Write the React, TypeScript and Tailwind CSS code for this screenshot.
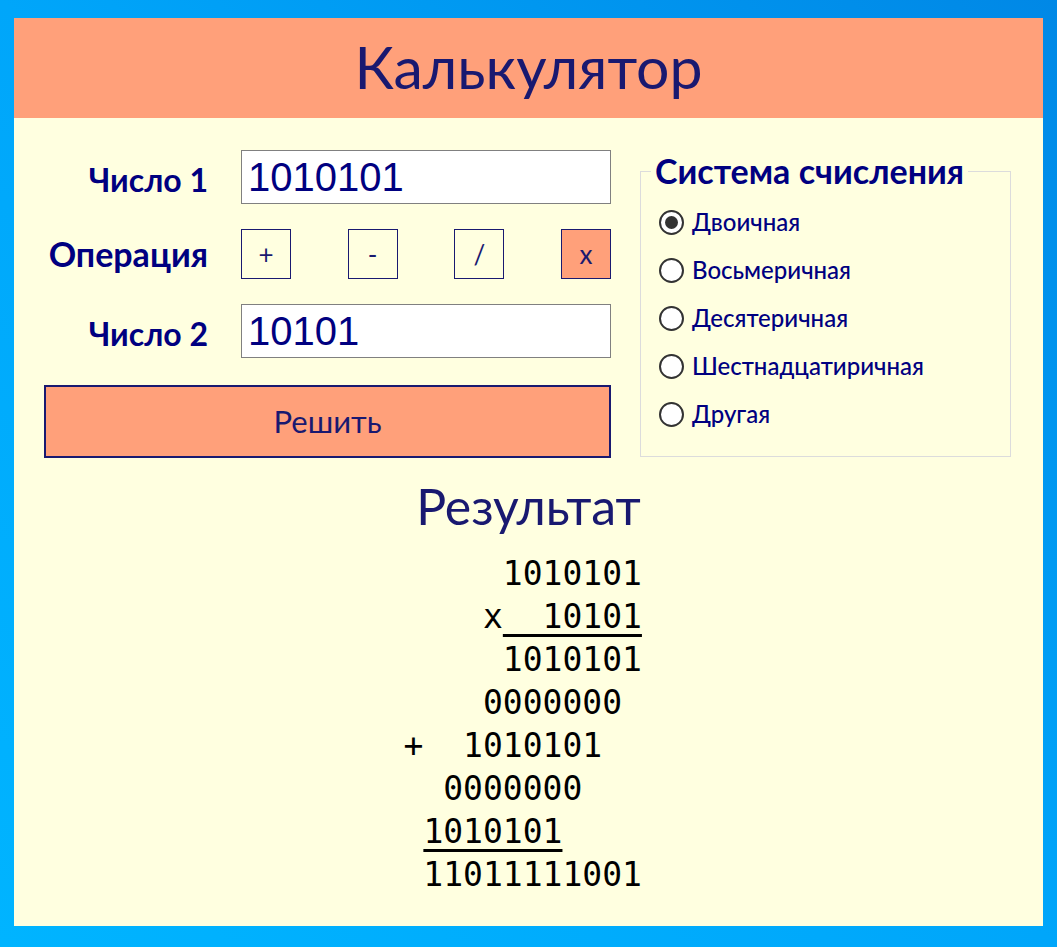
import { useState } from 'react';

const ops = ['+', '-', '/', 'x'];
const bases = ['Двоичная', 'Восьмеричная', 'Десятеричная', 'Шестнадцатиричная', 'Другая'];

// one line of the column multiplication: plain prefix, optional underlined part
const lines: [string, string?][] = [
  ['     1010101'],
  ['    x', '  10101'],
  ['     1010101'],
  ['    0000000'],
  ['+  1010101'],
  ['  0000000'],
  [' ', '1010101'],
  [' 11011111001'],
];

export default function App() {
  const [op, setOp] = useState('x');
  const [base, setBase] = useState('Двоичная');

  return (
    <div className="min-h-screen w-full bg-gradient-to-tr from-[#00b4ff] via-[#00a6fa] to-[#0088e6] pt-[18px] pb-[21px] px-[14px] font-['Lato',sans-serif]">
      <div className="h-[908px] bg-[#ffffe0] flex flex-col">
        <div className="h-[100px] bg-[#ffa07a] flex items-center justify-center">
          <h1 className="text-[59px] leading-none text-[#191970] font-normal pb-1">Калькулятор</h1>
        </div>

        <div className="flex pt-8 pl-[30px] pr-[32px] gap-[29px]">
          <div className="w-[567px] flex flex-col">
            <div className="flex items-center gap-[33px]">
              <span className="w-[164px] text-right text-[32px] leading-none pt-[6px] font-bold text-[#000080]">Число 1</span>
              <input
                defaultValue="1010101"
                className="w-[370px] h-[54px] bg-white border border-[#808080] px-[6px] text-[40px] text-[#000080] font-['Liberation_Sans',sans-serif] outline-none"
              />
            </div>
            <div className="flex items-center gap-[33px] mt-[25px]">
              <span className="w-[164px] text-right text-[34px] leading-none font-bold text-[#000080]">Операция</span>
              <div className="w-[370px] flex justify-between">
                {ops.map((o) => (
                  <button
                    key={o}
                    onClick={() => setOp(o)}
                    className={`w-[50px] h-[50px] border border-[#191970] text-[26px] text-[#191970] ${op === o ? 'bg-[#ffa07a]' : 'bg-transparent'}`}
                  >
                    {o}
                  </button>
                ))}
              </div>
            </div>
            <div className="flex items-center gap-[33px] mt-[25px]">
              <span className="w-[164px] text-right text-[32px] leading-none pt-[6px] font-bold text-[#000080]">Число 2</span>
              <input
                defaultValue="10101"
                className="w-[370px] h-[54px] bg-white border border-[#808080] px-[6px] text-[40px] text-[#000080] font-['Liberation_Sans',sans-serif] outline-none"
              />
            </div>
            <button className="mt-[27px] h-[73px] w-full bg-[#ffa07a] border-2 border-[#191970] text-[31px] text-[#191970]">
              Решить
            </button>
          </div>

          <fieldset className="w-[371px] h-[306px] mt-[1px] border border-[#dcdcdc]">
            <legend className="ml-[10px] px-1 text-[34px] font-bold text-[#000080] leading-[40px]">Система счисления</legend>
            <div className="flex flex-col gap-[24px] mt-[19px] pl-[18px]">
              {bases.map((b) => (
                <label key={b} className="flex items-center gap-[8px] h-[24px] cursor-pointer" onClick={() => setBase(b)}>
                  <span className="w-[25px] h-[25px] rounded-full border-2 border-[#333] bg-white flex items-center justify-center shrink-0">
                    {base === b && <span className="w-[13px] h-[13px] rounded-full bg-[#333]" />}
                  </span>
                  <span className="text-[24px] text-[#000080] font-medium">{b}</span>
                </label>
              ))}
            </div>
          </fieldset>
        </div>

        <h2 className="text-center text-[50px] text-[#191970] mt-[18px] leading-[60px]">Результат</h2>

        <div className="mx-auto w-[240px] mt-[16px] -translate-x-[5px] text-[33px] leading-[43px] text-black font-['DejaVu_Sans_Mono',monospace]">
          {lines.map(([plain, under], i) => (
            <div key={i} className="h-[43px] whitespace-pre">
              {plain}
              {under && <span className="underline underline-offset-[6px] decoration-[3px]">{under}</span>}
            </div>
          ))}
        </div>
      </div>
    </div>
  );
}
